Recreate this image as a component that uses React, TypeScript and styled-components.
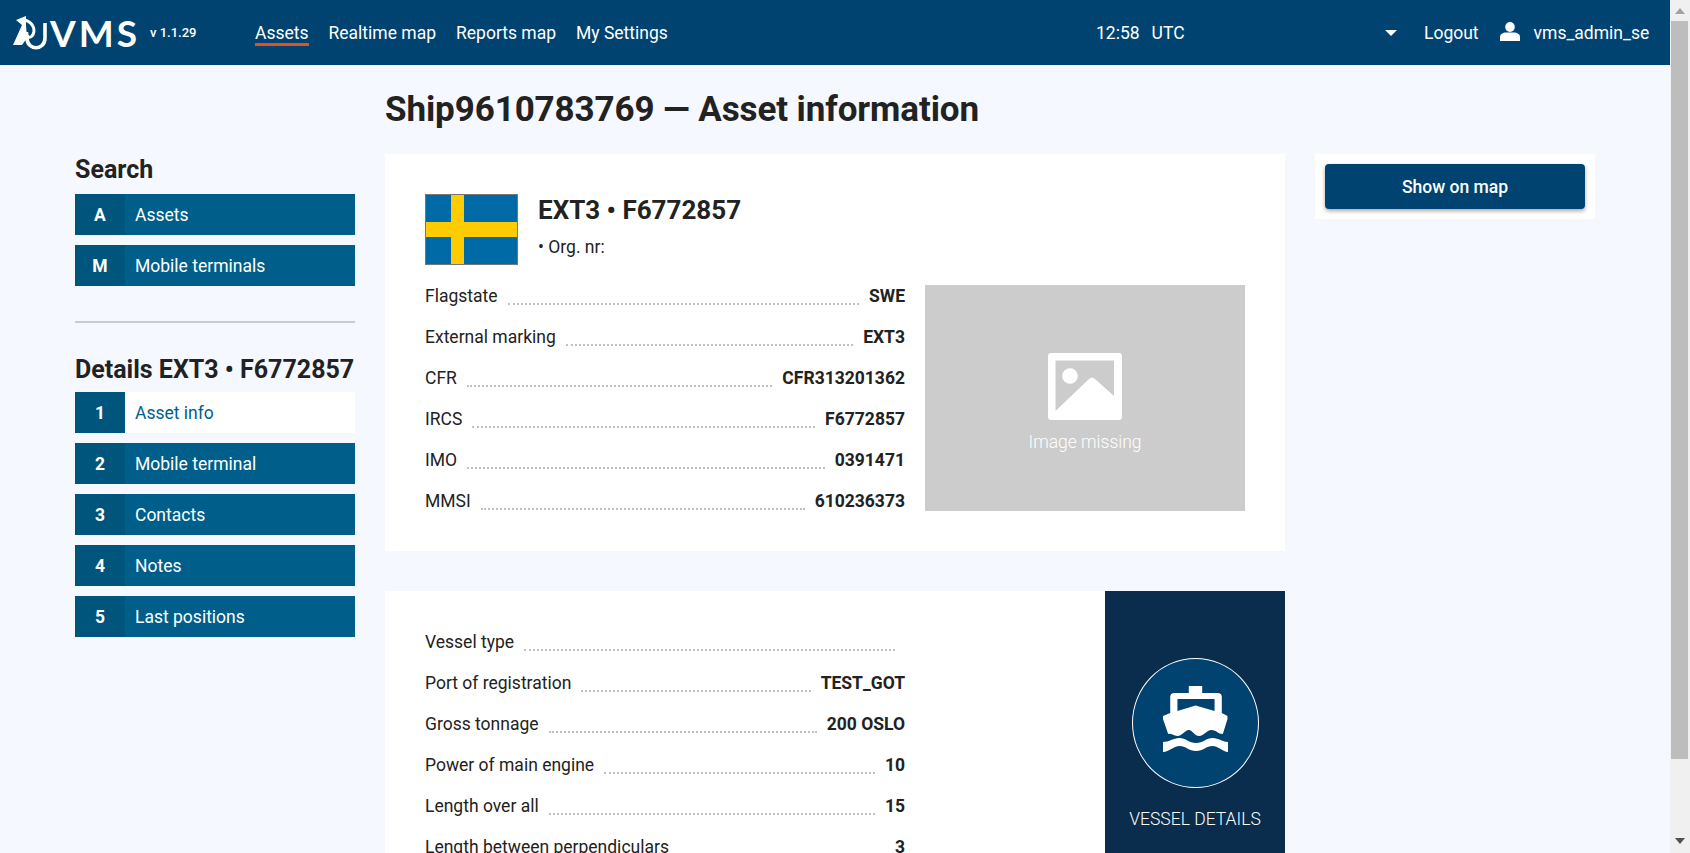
import React from "react";
import styled, { createGlobalStyle } from "styled-components";

const Global = createGlobalStyle`
  html, body { height: 100%; overflow: hidden; }
  body { margin: 0; background: #f5f8ff; color: #222; font-family: Roboto, "Liberation Sans", sans-serif; }
  * { box-sizing: border-box; }
`;

const Frame = styled.div`display: flex; height: 100vh;`;
const Shell = styled.div`flex: 1; min-width: 0; height: 100vh; overflow: hidden;`;
const Rail = styled.div`
  width: 20px; flex: none; background: #f0f0f0; display: flex; flex-direction: column; align-items: center; padding: 8px 0;
`;
const ArrowUp = styled.span`
  width: 0; height: 0; border-left: 5px solid transparent; border-right: 5px solid transparent; border-bottom: 6px solid #a3a3a3; flex: none;
`;
const ArrowDown = styled.span`
  width: 0; height: 0; border-left: 5px solid transparent; border-right: 5px solid transparent; border-top: 6px solid #505050; flex: none; margin-top: auto; margin-bottom: 1px;
`;
const Thumb = styled.div`
  width: 17px; height: 738px; background: #bdbdbd; margin-top: 7px; flex: none; align-self: flex-start; margin-left: 1px;
`;

const Header = styled.header`
  height: 65px; background: #004370; color: #fff; display: flex; align-items: center; font-size: 17.5px; padding-left: 13px;
`;
const LogoBox = styled.div`display: flex; align-items: center; width: 242px; flex: none;`;
const LogoMark = styled.svg`width: 37px; height: 34px; flex: none; display: block;`;
const LogoWord = styled.span`
  font-family: Lato, sans-serif; font-weight: 700; font-size: 37px; letter-spacing: 3px; line-height: 1;
`;
const Version = styled.span`font-size: 13px; font-weight: 500; margin-left: 10px;`;
const Nav = styled.nav`display: flex; gap: 20px; width: 841px; flex: none;`;
const NavLink = styled.a<{ $active?: boolean }>`
  display: block; height: 26px; line-height: 26px; border-bottom: 3px solid ${p => (p.$active ? "#e5501c" : "transparent")};
`;
const Clock = styled.div`display: flex; gap: 12px; width: 289px; flex: none;`;
const Caret = styled.span`
  width: 0; height: 0; border-left: 6px solid transparent; border-right: 6px solid transparent; border-top: 6px solid #fff; margin-right: 27px;
`;
const UserGroup = styled.div`display: flex; align-items: center;`;
const UserName = styled.span`margin-left: 14px;`;
const Logout = styled.span`margin-right: 21px;`;
const UserIcon = styled.svg`width: 20px; height: 19px; display: block; margin-top: -3px;`;

const Page = styled.div`
  display: grid; grid-template-columns: 280px 900px 280px; column-gap: 30px; padding-left: 75px; height: 875px; grid-template-rows: 89px auto;
`;
const Title = styled.h1`
  grid-column: 2 / 4; margin: 0; font-size: 35px; font-weight: 700; line-height: 42px; padding-top: 24px; letter-spacing: -.1px;
`;
const Side = styled.aside``;
const SideTitle = styled.h2`margin: 0 0 9px; font-size: 25px; line-height: 31px; font-weight: 700;`;
const DetailsTitle = styled(SideTitle)`margin-bottom: 7px;`;
const SideList = styled.div`display: flex; flex-direction: column; gap: 10px;`;
const SideItem = styled.a<{ $active?: boolean }>`
  display: flex; height: 41px; line-height: 43px; font-size: 17.5px; background: ${p => (p.$active ? "#fff" : "#005f8a")}; color: ${p => (p.$active ? "#005f8a" : "#fff")};
`;
const SideKey = styled.span`
  width: 50px; flex: none; text-align: center; font-weight: 700; background: #00557c; color: #fff; margin-right: 10px;
`;
const Divider = styled.hr`
  height: 2px; border: 0; background: #c8cbd0; margin: 35px 0 31px;
`;

const Center = styled.main`display: flex; flex-direction: column; gap: 40px;`;
const Card = styled.section`
  background: #fff; display: flex; padding: 40px;
`;
const TopCard = styled(Card)`height: 397px; flex-direction: column;`;
const LowerCard = styled(Card)`height: 349px; padding: 0 0 0 40px; justify-content: space-between; overflow: hidden;`;
const AssetHead = styled.div`display: flex; height: 71px; margin-bottom: 10px;`;
const Flag = styled.svg`width: 93px; height: 71px; flex: none; margin-right: 20px; display: block;`;
const AssetName = styled.h2`margin: 0; font-size: 26px; line-height: 32px; font-weight: 700;`;
const OrgNr = styled.div`font-size: 17.5px; margin-top: 11px;`;
const AssetBody = styled.div`display: flex; gap: 20px;`;
const Rows = styled.div`width: 480px; flex: none;`;
const LowerRows = styled(Rows)`padding-top: 30px;`;
const Row = styled.div`display: flex; height: 41px; align-items: center; font-size: 17.5px;`;
const Dots = styled.span`
  flex: 1; border-bottom: 2px dotted #c0c0c0; height: 2px; margin: 17px 10px 0;
`;
const Val = styled.b`font-weight: 700;`;
const Missing = styled.div`
  width: 320px; height: 226px; margin-top: 10px; background: #ccc; color: #fff; font-weight: 300; font-size: 17.5px; display: flex; flex-direction: column; align-items: center; padding-top: 68px;
`;
const MissingIcon = styled.svg`width: 74px; height: 67px; display: block; margin-bottom: 12px;`;
const Panel = styled.div`
  width: 180px; background: #0a2d4d; color: #fff; display: flex; flex-direction: column; align-items: center; padding-top: 67px; flex: none;
`;
const Disc = styled.div`
  width: 127px; height: 130px; border-radius: 50%; border: 1px solid #fff; background: #004370; display: flex; align-items: center; justify-content: center;
`;
const Ship = styled.svg`width: 65px; height: 66px; display: block; margin-bottom: 8px;`;
const PanelLabel = styled.div`font-weight: 300; font-size: 17.5px; margin-top: 21px;`;
const RightCard = styled.div`background: #fff; padding: 10px; height: 65px;`;
const MapButton = styled.button`
  width: 260px; height: 45px; border: 0; border-radius: 4px; background: #004370; color: #fff; font: 500 17.5px Roboto, sans-serif; box-shadow: 0 2px 4px rgba(0,0,0,.35);
`;

const first: [string, string][] = [["Flagstate","SWE"],["External marking","EXT3"],["CFR","CFR313201362"],["IRCS","F6772857"],["IMO","0391471"],["MMSI","610236373"]];
const second: [string, string][] = [["Vessel type",""],["Port of registration","TEST_GOT"],["Gross tonnage","200 OSLO"],["Power of main engine","10"],["Length over all","15"],["Length between perpendiculars","3"]];
const search = [["A","Assets"],["M","Mobile terminals"]];
const details = [["1","Asset info"],["2","Mobile terminal"],["3","Contacts"],["4","Notes"],["5","Last positions"]];

const InfoRow = ({ label, value }: { label: string; value: string }) => (
  <Row><span>{label}</span><Dots /><Val>{value}</Val></Row>
);

export default function App() {
  return (
    <Frame>
      <Global />
      <Shell>
        <Header>
          <LogoBox>
            <LogoMark viewBox="0 0 37 34" aria-hidden="true">
              <path fill="#fff" d="M3 4 L13 0 V9 L14 22 L9 29 H0 L9 9 Z" />
              <path fill="none" stroke="#fff" strokeWidth="3" d="M12 4 C21 7 23 15 19 20 C16 23 13 20 14 16" />
              <path fill="none" stroke="#fff" strokeWidth="3.6" d="M14 19 V22 C14 35 32 35 32 22 V7" />
            </LogoMark>
            <LogoWord>VMS</LogoWord>
            <Version>v 1.1.29</Version>
          </LogoBox>
          <Nav>
            <NavLink $active>Assets</NavLink>
            <NavLink>Realtime map</NavLink>
            <NavLink>Reports map</NavLink>
            <NavLink>My Settings</NavLink>
          </Nav>
          <Clock><span>12:58</span><span>UTC</span></Clock>
          <UserGroup>
            <Caret />
            <Logout>Logout</Logout>
            <UserIcon viewBox="0 0 20 19" fill="#fff" aria-hidden="true">
              <ellipse cx="10" cy="5" rx="4.8" ry="5" />
              <path d="M0 19 V15 C0 12 3 10.5 6 10.5 H14 C17 10.5 20 12 20 15 V19 Z" />
            </UserIcon>
            <UserName>vms_admin_se</UserName>
          </UserGroup>
        </Header>
        <Page>
          <span />
          <Title>Ship9610783769 — Asset information</Title>
          <Side>
            <SideTitle>Search</SideTitle>
            <SideList>
              {search.map(([k, t]) => <SideItem key={k}><SideKey>{k}</SideKey>{t}</SideItem>)}
            </SideList>
            <Divider />
            <DetailsTitle>Details EXT3 • F6772857</DetailsTitle>
            <SideList>
              {details.map(([k, t]) => <SideItem key={k} $active={k === "1"}><SideKey>{k}</SideKey>{t}</SideItem>)}
            </SideList>
          </Side>
          <Center>
            <TopCard>
              <AssetHead>
                <Flag viewBox="0 0 93 71" aria-hidden="true">
                  <rect width="93" height="71" fill="#777" />
                  <rect x="1" y="1" width="91" height="69" fill="#006aa7" />
                  <rect x="26" y="1" width="13" height="69" fill="#fecc00" />
                  <rect x="1" y="28" width="91" height="15" fill="#fecc00" />
                </Flag>
                <div>
                  <AssetName>EXT3 • F6772857</AssetName>
                  <OrgNr>• Org. nr:</OrgNr>
                </div>
              </AssetHead>
              <AssetBody>
                <Rows>{first.map(([l, v]) => <InfoRow key={l} label={l} value={v} />)}</Rows>
                <Missing>
                  <MissingIcon viewBox="0 0 74 67" aria-hidden="true">
                    <path fillRule="evenodd" fill="#fff" d="M3 0 H71 Q74 0 74 3 V64 Q74 67 71 67 H3 Q0 67 0 64 V3 Q0 0 3 0 Z M7.5 7.5 V58 L41 26 Q44 23 47 26 L66 43 V7.5 Z" />
                    <circle cx="22" cy="23" r="7.8" fill="#fff" />
                  </MissingIcon>
                  Image missing
                </Missing>
              </AssetBody>
            </TopCard>
            <LowerCard>
              <LowerRows>{second.map(([l, v]) => <InfoRow key={l} label={l} value={v} />)}</LowerRows>
              <Panel>
                <Disc>
                  <Ship viewBox="0 0 63 66" preserveAspectRatio="none" aria-hidden="true">
                    <path fillRule="evenodd" fill="#fff" d="M25 0 H38 V7 H53 Q57 7 57 11 V27 L62.5 30 V33 L58 48 C53 48 52 44 47 44 C42 44 40 50 35 50 C30 50 29 44 25 44 C21 44 19 50 14 50 C10 50 8 47 5 48 L0 33 V30 L7 27 V11 Q7 7 11 7 H25 Z M14 13 V25 L31.5 19.5 L50 25 V13 Z" />
                    <path fill="#fff" d="M0 56 C6 56 10 52 16 52 C22 52 25 57 32 57 C39 57 42 52 48 52 C54 52 58 56 63 56 V66 C58 66 54 60 48 60 C42 60 39 65 32 65 C25 65 22 60 16 60 C10 60 6 66 0 66 Z" />
                  </Ship>
                </Disc>
                <PanelLabel>VESSEL DETAILS</PanelLabel>
              </Panel>
            </LowerCard>
          </Center>
          <div>
            <RightCard><MapButton>Show on map</MapButton></RightCard>
          </div>
        </Page>
      </Shell>
      <Rail>
        <ArrowUp />
        <Thumb />
        <ArrowDown />
      </Rail>
    </Frame>
  );
}
